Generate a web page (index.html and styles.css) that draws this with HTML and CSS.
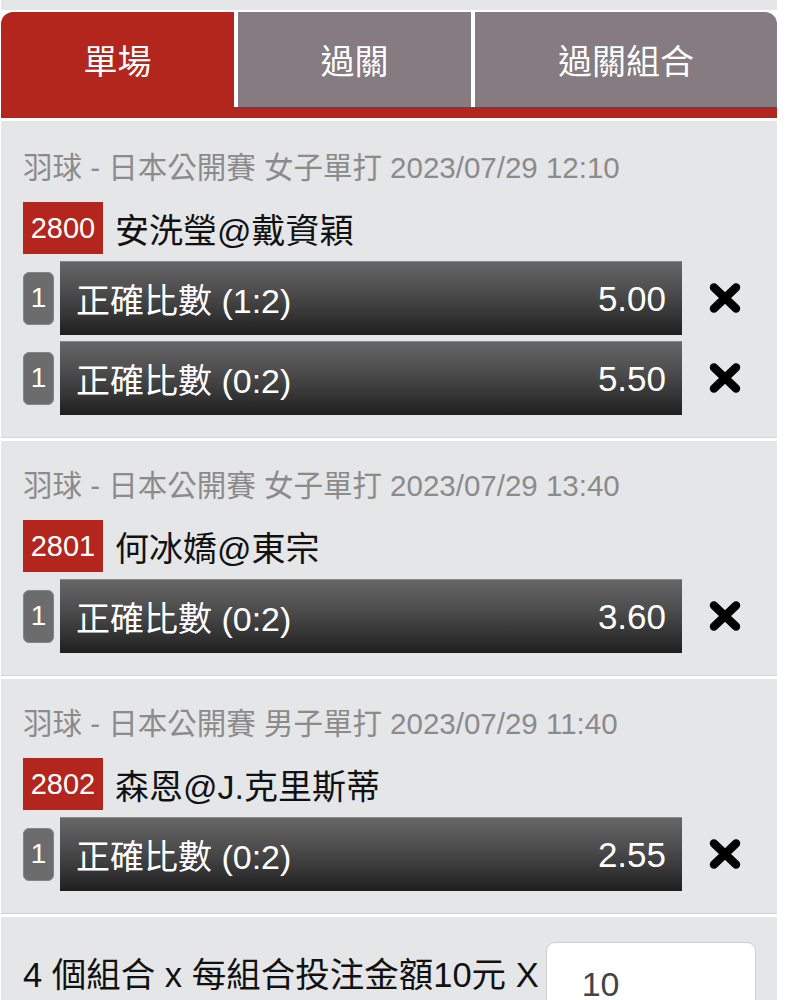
FILE: index.html
```html
<!DOCTYPE html>
<html lang="zh-Hant">
<head>
<meta charset="UTF-8">
<meta name="viewport" content="width=device-width, initial-scale=1.0">
<title>投注單</title>
<link rel="stylesheet" href="styles.css">
</head>
<body>
<div class="slip">
    <div class="top-strip"></div>

    <div class="tabs">
        <div class="tab active">單場</div>
        <div class="tab">過關</div>
        <div class="tab">過關組合</div>
    </div>
    <div class="tab-line"></div>

    <div class="matches">
        <div class="match first">
            <div class="meta">羽球 - 日本公開賽 女子單打 2023/07/29 12:10</div>
            <div class="teams"><span class="code">2800</span><span class="names">安洗瑩@戴資穎</span></div>
            <div class="bet">
                <span class="qty">1</span>
                <div class="bar"><span>正確比數 (1:2)</span><span class="odds">5.00</span></div>
                <svg class="remove" viewBox="0 0 32 30"><path d="M5 4.5 L27 25.5 M27 4.5 L5 25.5"/></svg>
            </div>
            <div class="bet">
                <span class="qty">1</span>
                <div class="bar"><span>正確比數 (0:2)</span><span class="odds">5.50</span></div>
                <svg class="remove" viewBox="0 0 32 30"><path d="M5 4.5 L27 25.5 M27 4.5 L5 25.5"/></svg>
            </div>
        </div>

        <div class="match">
            <div class="meta">羽球 - 日本公開賽 女子單打 2023/07/29 13:40</div>
            <div class="teams"><span class="code">2801</span><span class="names">何冰嬌@東宗</span></div>
            <div class="bet">
                <span class="qty">1</span>
                <div class="bar"><span>正確比數 (0:2)</span><span class="odds">3.60</span></div>
                <svg class="remove" viewBox="0 0 32 30"><path d="M5 4.5 L27 25.5 M27 4.5 L5 25.5"/></svg>
            </div>
        </div>

        <div class="match">
            <div class="meta">羽球 - 日本公開賽 男子單打 2023/07/29 11:40</div>
            <div class="teams"><span class="code">2802</span><span class="names">森恩@J.克里斯蒂</span></div>
            <div class="bet">
                <span class="qty">1</span>
                <div class="bar"><span>正確比數 (0:2)</span><span class="odds">2.55</span></div>
                <svg class="remove" viewBox="0 0 32 30"><path d="M5 4.5 L27 25.5 M27 4.5 L5 25.5"/></svg>
            </div>
        </div>
    </div>

    <div class="stake">
        <span class="stake-text">4 個組合 x 每組合投注金額10元 X</span>
        <input class="stake-input" type="text" value="10">
    </div>
</div>
</body>
</html>
```
FILE: styles.css
```css
body {
    margin: 0;
    background: #fff;
    font-family: 'Liberation Sans', 'Noto Sans CJK TC', sans-serif;
    overflow: hidden;
}
.slip {
    width: 776px;
    margin-left: 1px;
}
.top-strip {
    height: 10px;
    background: #e5e6e8;
}
.tabs {
    display: grid;
    grid-template-columns: 233px 233px 1fr;
    gap: 4px;
    margin-top: 2px;
    height: 95px;
}
.tab {
    display: flex;
    align-items: center;
    justify-content: center;
    background: #857b80;
    color: #fff;
    font-size: 34px;
}
.tab:first-child { border-top-left-radius: 12px; }
.tab:last-child { border-top-right-radius: 12px; }
.tab.active { background: #b3261d; }
.tab-line {
    height: 11px;
    background: #b3261d;
    margin-bottom: 3px;
}
.matches {
    display: flex;
    flex-direction: column;
    gap: 3px;
}
.match {
    background: #e5e6e8;
    padding: 27px 0 22px 22px;
    border-bottom: 1px solid #d2d3d5;
}
.match.first { padding-top: 29px; }
.meta {
    color: #8b8b8b;
    font-size: 29.5px;
    line-height: 36px;
    height: 36px;
    white-space: nowrap;
}
.teams {
    display: flex;
    align-items: center;
    margin-top: 16px;
    margin-bottom: 7px;
}
.code {
    display: flex;
    align-items: center;
    justify-content: center;
    width: 80px;
    height: 52px;
    background: #b3261d;
    color: #fff;
    font-size: 29px;
}
.names {
    margin-left: 12px;
    font-size: 34px;
    color: #111;
}
.bet {
    display: flex;
    align-items: center;
}
.bet + .bet { margin-top: 6px; }
.qty {
    display: flex;
    align-items: center;
    justify-content: center;
    width: 29px;
    height: 51px;
    margin-right: 6px;
    background: #6c6c6c;
    border: 1px solid #858585;
    border-radius: 6px;
    color: #fff;
    font-size: 28px;
}
.bar {
    display: flex;
    align-items: center;
    justify-content: space-between;
    width: 622px;
    height: 74px;
    box-sizing: border-box;
    padding: 0 16px 0 16px;
    background: linear-gradient(#666 0%, #4d4d4d 40%, #333 75%, #1f1f1f 100%);
    border-top: 1px solid #8a8a8a;
    color: #fff;
    font-size: 34px;
}
.odds { font-size: 35px; }
.remove {
    width: 32px;
    height: 30px;
    margin-left: 27px;
}
.remove path {
    fill: none;
    stroke: #000;
    stroke-width: 8.5;
    stroke-linecap: round;
}
.stake {
    display: flex;
    align-items: flex-start;
    margin-top: 3px;
    height: 120px;
    padding: 25px 0 0 22px;
    background: #e5e6e8;
}
.stake-text {
    margin-top: 5px;
    font-size: 34.5px;
    color: #111;
    white-space: nowrap;
}
.stake-input {
    width: 210px;
    height: 90px;
    box-sizing: border-box;
    margin-left: 7px;
    padding: 0 0 6px 35px;
    border: 1px solid #cfcfd3;
    border-radius: 9px;
    background: #fff;
    font-family: inherit;
    font-size: 34px;
    color: #444;
}
```
